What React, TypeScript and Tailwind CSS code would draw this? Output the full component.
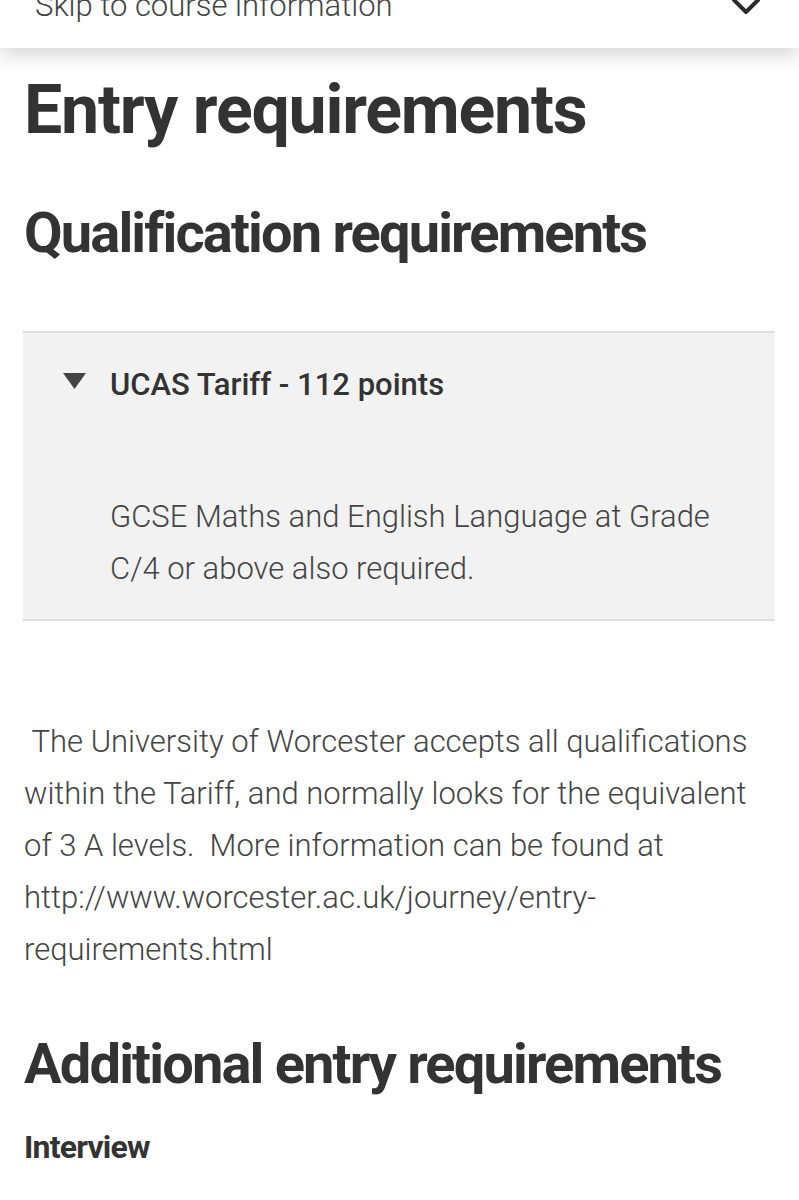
import React from "react";

function ChevronDown() {
  return (
    <svg width="30" height="20" viewBox="0 0 30 20" fill="none" className="block">
      <polyline points="3,2 15,14 27,2" stroke="#2b2b2b" strokeWidth="4" strokeLinecap="round" strokeLinejoin="round" />
    </svg>
  );
}

export default function App() {
  return (
    <div className="w-[799px] h-[1200px] overflow-hidden bg-white text-[#333] font-['Roboto',sans-serif]">
      {/* Sticky course nav */}
      <div className="relative z-10 h-[48px] bg-white shadow-[0_6px_22px_rgba(0,0,0,0.18)] overflow-hidden flex items-start justify-between pl-[35px] pr-[38px]">
        <span className="-mt-[12px] text-[31px] leading-[36px] font-light text-[#444]">Skip to course information</span>
        <span className="-mt-[2px]">
          <ChevronDown />
        </span>
      </div>

      <div className="px-[24px]">
        <h1 className="mt-[22px] text-[68px] leading-[80px] font-bold tracking-[-1.2px]">Entry requirements</h1>
        <h2 className="mt-[51px] text-[56px] leading-[64px] font-bold tracking-[-1.85px]">Qualification requirements</h2>

        {/* Tariff accordion */}
        <div className="mt-[66px] -ml-[1px] bg-[#f2f2f2] border-y-2 border-[#dedede] pl-[40px] pr-[30px] pt-[32px] pb-[24px]">
          <div className="flex items-center gap-[24px]">
            <svg width="23" height="16" viewBox="0 0 23 16" className="block shrink-0 -mt-[9px]">
              <polygon points="0,0 23,0 11.5,16" fill="#444" />
            </svg>
            <span className="text-[31px] leading-[40px] font-medium text-[#333]">UCAS Tariff - 112 points</span>
          </div>
          <p className="mt-[86px] pl-[47px] text-[31px] leading-[52px] font-light text-[#444]">
            GCSE Maths and English Language at Grade C/4 or above also required.
          </p>
        </div>

        <p className="mt-[95px] text-[31px] leading-[52px] font-light text-[#444] whitespace-pre-wrap">
          {" The University of Worcester accepts all qualifications within the Tariff, and normally looks for the equivalent of 3 A levels.  More information can be found at http://www.worcester.ac.uk/journey/entry-requirements.html"}
        </p>

        <h2 className="mt-[56px] text-[56px] leading-[64px] font-bold tracking-[-1.85px]">Additional entry requirements</h2>
        <h3 className="mt-[31px] text-[32px] leading-[40px] font-bold tracking-[-0.8px]">Interview</h3>
      </div>
    </div>
  );
}
